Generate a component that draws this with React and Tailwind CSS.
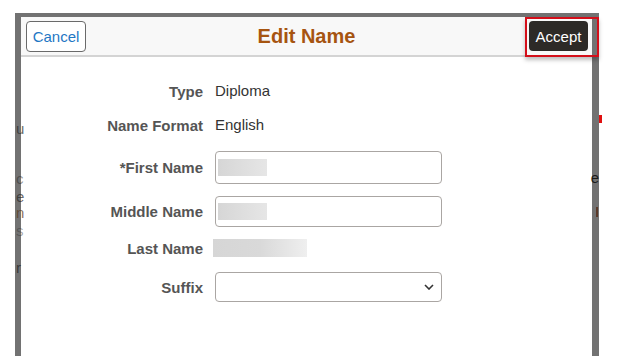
export default function App() {
  return (
    <div className="w-[624px] h-[356px] bg-white overflow-hidden pl-[15px] pt-[13px] font-['Liberation_Sans',Arial,sans-serif]">
      {/* page mask behind the dialog */}
      <div className="relative w-[584px] h-[343px] bg-[#727272] pt-[4px] pl-[6px] pr-[7px]">
        {/* bits of the page showing through the mask */}
        <span className="absolute left-[1px] top-[108px] text-[15px] leading-none text-[#2a2a2a]/70">u</span>
        <span className="absolute left-[1px] top-[158px] text-[15px] leading-none text-[#2a2a2a]/50">c</span>
        <span className="absolute left-[1px] top-[176px] text-[15px] leading-none text-[#2a2a2a]/70">e</span>
        <span className="absolute left-[1px] top-[192px] text-[15px] leading-none text-[#5a3a1a]/70">n</span>
        <span className="absolute left-[1px] top-[210px] text-[15px] leading-none text-[#2a2a2a]/40">s</span>
        <span className="absolute left-[1px] top-[247px] text-[15px] leading-none text-[#2a2a2a]/80">r</span>
        <span className="absolute right-[-3px] top-[102px] w-[3px] h-[8px] bg-[#e01010]" />
        <span className="absolute right-[0px] top-[157px] text-[15px] leading-none text-[#1a1a1a]">e</span>
        <span className="absolute right-[1px] top-[194px] w-[2px] h-[10px] bg-[#5a3a2a]" />

        <div className="w-full h-full bg-white flex flex-col">
          {/* header */}
          <div className="relative h-[40px] bg-[#f8f8f8] border-b-2 border-[#d4d4d4] flex items-center justify-between pl-[5px] pr-[4px] shrink-0">
            <button className="w-[60px] h-[31px] rounded-[4px] border border-[#6a6a6a] bg-white text-[#1f77c4] text-[15px] leading-none">
              Cancel
            </button>
            <h1 className="absolute left-0 right-0 text-center pointer-events-none text-[20px] font-bold text-[#a65410] leading-none">
              Edit Name
            </h1>
            <button className="w-[59px] h-[30px] rounded-[4px] bg-[#2d2a27] text-white text-[15px] leading-none">
              Accept
            </button>
            {/* highlight box */}
            <div className="absolute right-[-7px] top-0 w-[74px] h-[40px] border-2 border-[#d40f1a] shadow-[0_3px_4px_rgba(0,0,0,0.25)] pointer-events-none" />
          </div>

          {/* form */}
          <div className="flex flex-col text-[15px]">
            <Row className="mt-[23px] h-[22px]" label="Type">
              <span className="text-[#333]">Diploma</span>
            </Row>
            <Row className="mt-[12px] h-[22px]" label="Name Format">
              <span className="text-[#333]">English</span>
            </Row>
            <Row className="mt-[15px] h-[33px]" label="*First Name">
              <Field h="h-[33px]" />
            </Row>
            <Row className="mt-[12px] h-[31px]" label="Middle Name">
              <Field h="h-[31px]" />
            </Row>
            <Row className="mt-[10px] h-[22px]" label="Last Name">
              <div className="-ml-[2px] w-[94px] h-[18px] bg-gradient-to-r from-[#d6d6d6] via-[#d9d9d9] to-[#efefef]" />
            </Row>
            <Row className="mt-[13px] h-[30px]" label="Suffix">
              <div className="w-[227px] h-[30px] rounded-[4px] border border-[#aaa6a3] flex items-center justify-end pr-[7px]">
                <svg viewBox="0 0 10 6" className="w-[10px] h-[6px]" fill="none" stroke="#333" strokeWidth="1.6">
                  <path d="M1 1l4 4 4-4" />
                </svg>
              </div>
            </Row>
          </div>
        </div>
      </div>
    </div>
  );
}

function Row({ label, children, className }) {
  return (
    <div className={`flex items-center ${className}`}>
      <div className="w-[182px] text-right font-bold text-[#555] leading-none">{label}</div>
      <div className="ml-[12px] flex items-center">{children}</div>
    </div>
  );
}

function Field({ h }) {
  return (
    <div className={`w-[227px] ${h} rounded-[4px] border border-[#aaa6a3] flex items-center pl-[2px]`}>
      <div className="w-[49px] h-[17px] bg-gradient-to-r from-[#d6d6d6] to-[#e6e6e6]" />
    </div>
  );
}
